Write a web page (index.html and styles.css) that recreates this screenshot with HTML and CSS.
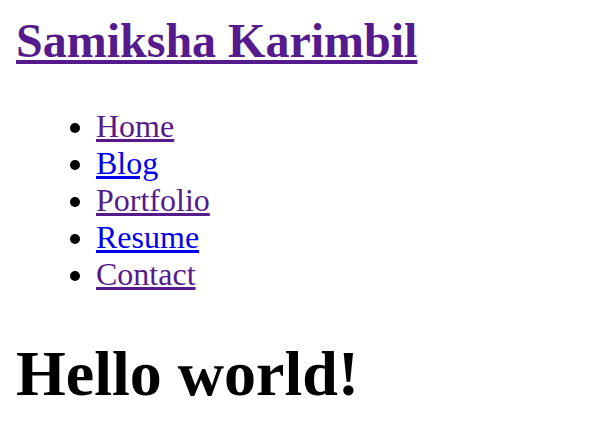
FILE: index.html
```html
<!DOCTYPE html>
<html>
<head>
<meta charset="utf-8">
<title>Samiksha Karimbil</title>
<link rel="stylesheet" href="styles.css">
</head>
<body>
<header class="site-header">
  <a class="site-title visited" href="#">Samiksha Karimbil</a>
  <ul class="nav">
    <li><a class="visited" href="#">Home</a></li>
    <li><a href="#">Blog</a></li>
    <li><a class="visited" href="#">Portfolio</a></li>
    <li><a href="#">Resume</a></li>
    <li><a class="visited" href="#">Contact</a></li>
  </ul>
</header>
<h1 class="hello">Hello world!</h1>
</body>
</html>
```
FILE: styles.css
```css
html, body {
  background: #fff;
}
body {
  margin: 13px 16px 16px 16px;
  font-family: "Liberation Serif", "Times New Roman", serif;
  font-size: 32px;
  color: #000;
}
a {
  color: #0000ee;
  text-decoration: underline;
}
a.visited {
  color: #551a8b;
}
.site-title {
  display: block;
  width: max-content;
  font-size: 48px;
  font-weight: bold;
}
.nav {
  margin: 40px 0 0 0;
  padding-left: 80px;
  list-style: disc;
}
.hello {
  font-size: 64px;
  font-weight: bold;
  margin: 44px 0 0 0;
}
```
